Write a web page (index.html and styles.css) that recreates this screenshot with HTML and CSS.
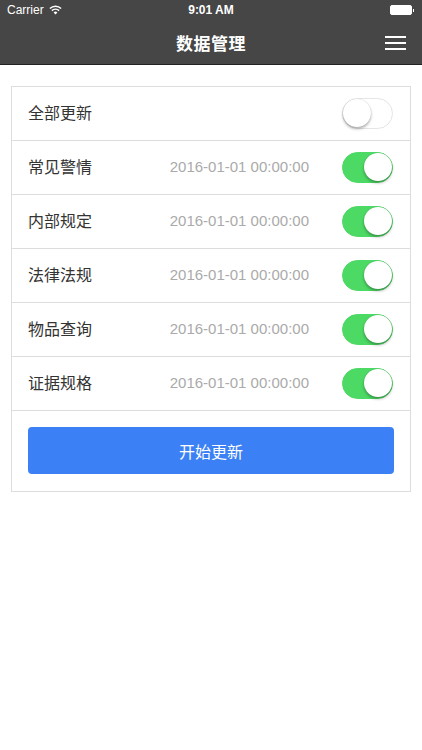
FILE: index.html
```html
<!DOCTYPE html>
<html lang="zh-CN">
<head>
  <meta charset="UTF-8"/>
  <meta name="viewport" content="width=device-width, initial-scale=1"/>
  <title>数据管理</title>
  <link rel="stylesheet" href="styles.css">
</head>
<body>

  <header class="topbar">
    <div class="status">
      <span class="carrier">Carrier
        <svg class="wifi" width="13" height="10" viewBox="0 0 13 10">
          <path d="M6.5 9.5 L4.6 7.4 A2.8 2.8 0 0 1 8.4 7.4 Z" fill="#fff"/>
          <path d="M2.9 5.6 A5.2 5.2 0 0 1 10.1 5.6" stroke="#fff" stroke-width="1.5" fill="none"/>
          <path d="M0.9 3.5 A8 8 0 0 1 12.1 3.5" stroke="#fff" stroke-width="1.5" fill="none"/>
        </svg>
      </span>
      <span class="clock">9:01 AM</span>
      <span class="battery"><span class="battery-body"></span><span class="battery-tip"></span></span>
    </div>
    <nav class="navbar">
      <h1>数据管理</h1>
      <span class="menu">
        <span></span><span></span><span></span>
      </span>
    </nav>
  </header>

  <main class="card">
    <div class="row">
      <span class="label">全部更新</span>
      <span class="switch"></span>
    </div>
    <div class="row">
      <span class="label">常见警情</span>
      <span class="date">2016-01-01 00:00:00</span>
      <span class="switch on"></span>
    </div>
    <div class="row">
      <span class="label">内部规定</span>
      <span class="date">2016-01-01 00:00:00</span>
      <span class="switch on"></span>
    </div>
    <div class="row">
      <span class="label">法律法规</span>
      <span class="date">2016-01-01 00:00:00</span>
      <span class="switch on"></span>
    </div>
    <div class="row">
      <span class="label">物品查询</span>
      <span class="date">2016-01-01 00:00:00</span>
      <span class="switch on"></span>
    </div>
    <div class="row">
      <span class="label">证据规格</span>
      <span class="date">2016-01-01 00:00:00</span>
      <span class="switch on"></span>
    </div>
    <div class="actions">
      <button class="start">开始更新</button>
    </div>
  </main>

</body>
</html>
```

FILE: styles.css
```css
body {
  margin: 0;
  background-color: #fff;
  color: #333;
  font-family: "Helvetica Neue", "Liberation Sans", "Noto Sans CJK SC", sans-serif;
}

.topbar {
  background-color: #464646;
  border-bottom: 1px solid #222;
  color: #fff;
}

.status {
  height: 20px;
  display: flex;
  align-items: center;
  justify-content: space-between;
  padding: 0 8px 0 7px;
  font-size: 12px;
  position: relative;
}

.carrier {
  display: flex;
  align-items: center;
  gap: 5px;
}

.clock {
  position: absolute;
  left: 0;
  right: 0;
  text-align: center;
  font-weight: bold;
}

.battery {
  display: flex;
  align-items: center;
}

.battery-body {
  width: 20px;
  height: 8px;
  background: #fff;
  border: 1px solid #fff;
  border-radius: 2px;
}

.battery-tip {
  width: 1.5px;
  height: 3px;
  background: #fff;
  margin-left: 1px;
}

.navbar {
  height: 44px;
  display: flex;
  align-items: center;
  justify-content: center;
  position: relative;
}

.navbar h1 {
  margin: 0;
  font-size: 17px;
  font-weight: bold;
  letter-spacing: 0.5px;
}

.menu {
  position: absolute;
  right: 16px;
  top: 16px;
  width: 21px;
  display: flex;
  flex-direction: column;
  gap: 4px;
}

.menu span {
  height: 2px;
  background: #fff;
}

.card {
  margin: 21px 11px;
  border: 1px solid #ddd;
}

.row {
  height: 53px;
  display: flex;
  align-items: center;
  padding: 0 17px 0 16px;
  border-bottom: 1px solid #ddd;
}

.label {
  flex: 1;
  font-size: 16px;
  margin-top: -3px;
}

.date {
  font-size: 15px;
  color: #aaa;
  margin-right: 33px;
  margin-top: -3px;
}

.switch {
  width: 51px;
  height: 31px;
  box-sizing: border-box;
  border-radius: 16px;
  border: 1.5px solid #e5e5e5;
  background: #fff;
  position: relative;
}

.switch::after {
  content: "";
  position: absolute;
  top: 0;
  left: 0;
  width: 28px;
  height: 28px;
  border-radius: 50%;
  background: #fff;
  box-shadow: 0 2px 3px rgba(0,0,0,0.3), 0 0 1px rgba(0,0,0,0.2);
}

.switch.on {
  background: #4cd964;
  border-color: #4cd964;
}

.switch.on::after {
  left: auto;
  right: 0;
}

.actions {
  padding: 16px 16px 17px;
}

.start {
  display: block;
  width: 100%;
  height: 47px;
  border: none;
  border-radius: 4px;
  background: #3b80f5;
  color: #fff;
  font-size: 16px;
  font-family: inherit;
}
```
